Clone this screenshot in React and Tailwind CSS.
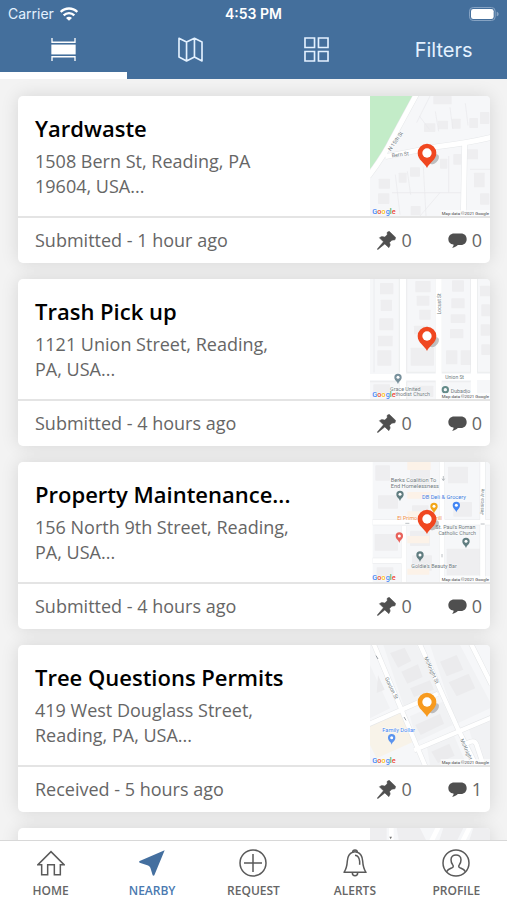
import React from "react";

const INK = "#4f4f4f";

function Wifi() {
  return (
    <svg viewBox="0 0 54 42" className="h-[14px] w-[18px]" fill="none" stroke="#fff" strokeWidth="7" aria-hidden="true">
      <path d="M2 15C16 1 38 1 52 15" />
      <path d="M11 25C20 16 34 16 43 25" />
      <path d="M27 41l-9-8c5-5 13-5 18 0z" fill="#fff" stroke="none" />
    </svg>
  );
}

function Battery() {
  return (
    <svg viewBox="0 0 90 42" className="h-[14px] w-[30px]" aria-hidden="true">
      <rect x="1.5" y="1.5" width="77" height="39" rx="11" fill="none" stroke="#86a3c3" strokeWidth="3" />
      <rect x="6" y="6" width="68" height="30" rx="7" fill="#fff" />
      <path d="M83 14c8 2 8 12 0 14z" fill="#86a3c3" />
    </svg>
  );
}

function ListIcon() {
  return (
    <svg viewBox="0 0 76 70" className="h-[23px] w-[25px]" fill="none" stroke="#fff" strokeWidth="4" aria-hidden="true">
      <path d="M3 0v13h70V0M3 70V57h70v13" />
      <rect x="1" y="20" width="74" height="30" fill="#fff" stroke="none" />
    </svg>
  );
}

function MapIcon() {
  return (
    <svg viewBox="0 0 76 74" className="h-[25px] w-[25px]" fill="none" stroke="#e3f1ff" strokeWidth="5" strokeLinejoin="round" aria-hidden="true">
      <path d="M3 3l23 11L50 3l23 11v58L50 60 26 72 3 60zM26 14v58M50 3v57" />
    </svg>
  );
}

function GridIcon() {
  return (
    <svg viewBox="0 0 76 76" className="h-[25px] w-[25px]" fill="none" stroke="#e3f1ff" strokeWidth="5" aria-hidden="true">
      <path d="M3 3h29v29H3zM44 3h29v29H44zM3 44h29v29H3zM44 44h29v29H44z" />
    </svg>
  );
}

function TackIcon() {
  return (
    <svg viewBox="0 0 56 56" className="h-[19px] w-[19px]" fill={INK} stroke={INK} strokeWidth="1.5" strokeLinejoin="round" aria-hidden="true">
      <path d="M36 1L55 19l-2 7-9 1-7 7 2 7-4 8-12-11L2 55l-1-2 18-21L7 20l7-4 9 2 7-7V4z" />
    </svg>
  );
}

function CommentIcon() {
  return (
    <svg viewBox="0 0 56 44" className="h-[15px] w-[19px]" fill={INK} aria-hidden="true">
      <path d="M18 1h20c11 0 17 7 17 17s-7 17-17 17h-9c-4 5-10 7-17 8 4-3 5-6 4-9C6 32 1 27 1 18 1 8 8 1 18 1z" />
    </svg>
  );
}

function HomeIcon() {
  return (
    <svg viewBox="0 0 84 76" className="h-[26px] w-[28px]" fill="none" stroke="#5a5a5a" strokeWidth="4.5" strokeLinejoin="miter" aria-hidden="true">
      <path d="M3 43h11v30h18V43h20v30h18V43h11L42 4z" />
    </svg>
  );
}

function NearbyIcon() {
  return (
    <svg viewBox="0 0 78 78" className="h-[26px] w-[26px]" fill="#446f9f" aria-hidden="true">
      <path d="M77 1L46 76c-1 2-4 2-5 0l-6-20c-1-5-5-8-10-10L2 38c-2-1-2-4 0-5z" />
    </svg>
  );
}

function RequestIcon() {
  return (
    <svg viewBox="0 0 84 84" className="h-[28px] w-[28px]" fill="none" stroke="#5a5a5a" strokeWidth="4.5" aria-hidden="true">
      <circle cx="42" cy="42" r="39" />
      <path d="M42 15v54M15 42h54" />
    </svg>
  );
}

function BellIcon() {
  return (
    <svg viewBox="0 0 72 84" className="h-[28px] w-[24px]" fill="none" stroke="#5a5a5a" strokeWidth="4.5" strokeLinejoin="round" aria-hidden="true">
      <path d="M29 10c0-9 14-9 14 0 12 4 15 13 16 26 1 16 3 24 10 34H3c7-10 9-18 10-34 1-13 4-22 16-26z" />
      <path d="M29 10c4-2 10-2 14 0M28 71c0 12 16 12 16 0M36 19c9 1 13 7 14 18v10" />
    </svg>
  );
}

function ProfileIcon() {
  return (
    <svg viewBox="0 0 84 84" className="h-[28px] w-[28px]" fill="none" stroke="#5a5a5a" strokeWidth="4.5" aria-hidden="true">
      <circle cx="42" cy="42" r="39" />
      <path d="M14 68c3-7 10-9 17-12 4-2 3-7 1-9-4-5-5-10-5-15 0-19 30-19 30 0 0 5-1 10-5 15-2 2-3 7 1 9 7 3 14 5 17 12" />
    </svg>
  );
}

// Small place marker used inside the map thumbnails; (x, y) is the head's centre.
function Poi({ x, y, fill }) {
  return (
    <g transform={`translate(${x} ${y})`}>
      <path d="M0 20C-2 11-11 9-11-1a11 11 0 0 1 22 0C11 9 2 11 0 20z" fill={fill} />
      <circle r="4.5" cy="-1" fill="#fff" />
    </g>
  );
}

function Label({ x, y, fill = "#6f7a80", size = 17, rotate = 0, anchor = "start", children }) {
  return (
    <text
      transform={`translate(${x} ${y}) rotate(${rotate})`}
      fill={fill}
      fontSize={size}
      textAnchor={anchor}
      stroke="#fff"
      strokeWidth="3"
      paintOrder="stroke"
      strokeOpacity=".7"
    >
      {children}
    </text>
  );
}

function Houses({ list }) {
  return list.map(([x, y, w, h], i) => <rect key={i} x={x} y={y} width={w} height={h} rx="2" fill="#eeeef0" />);
}

function YardMap() {
  return (
    <g>
      <path d="M0 0h136L46 165 0 220z" fill="#c3ecc8" />
      <Houses
        list={[
          [190, 0, 55, 25], [162, 82, 34, 26], [204, 74, 30, 26], [246, 68, 26, 30], [298, 66, 26, 30], [330, 48, 28, 36],
          [26, 248, 34, 30], [86, 230, 24, 30], [120, 214, 30, 28], [210, 188, 22, 30], [250, 174, 24, 32], [290, 160, 34, 30],
          [24, 292, 34, 32], [312, 230, 32, 44], [330, 292, 28, 34], [122, 330, 30, 28],
        ]}
      />
      <path d="M180 0l-40 80M148 60l30 40M196 46l10 60M240 34l8 64M286 22l8 66M66 290h210M76 236l14 120M112 226l10 70M160 212l8 148M236 180v110M210 290l-60 70M300 220h60" stroke="#e8e9eb" strokeWidth="2" fill="none" />
      <path d="M142-10L66 130Q44 176-4 240M46 182L200 152Q290 142 364 124M284 142L280 362" stroke="#e6e8ea" strokeWidth="18" fill="none" />
      <path d="M142-10L66 130Q44 176-4 240M46 182L200 152Q290 142 364 124M284 142L280 362" stroke="#fff" strokeWidth="15" fill="none" />
      <Label x={62} y={166} rotate={-55} size={16}>N 15th St</Label>
      <Label x={66} y={184} rotate={-7} size={16}>Bern St</Label>
    </g>
  );
}

function TrashMap() {
  return (
    <g>
      <Houses
        list={[
          [30, 12, 40, 34], [32, 62, 34, 34], [28, 118, 42, 36], [24, 170, 44, 32], [22, 214, 42, 46],
          [136, 6, 46, 34], [140, 50, 38, 30], [148, 92, 34, 30], [132, 140, 42, 26], [122, 206, 70, 54],
          [246, 4, 36, 34], [244, 58, 40, 30], [242, 106, 44, 26], [240, 150, 40, 28], [228, 214, 34, 42], [272, 214, 34, 44],
          [330, 20, 30, 32], [334, 76, 26, 36], [332, 136, 28, 34], [334, 196, 26, 32], [10, 316, 50, 36], [130, 320, 60, 34],
        ]}
      />
      <path d="M12 0v280M88 0v280M110 0v280h88V0M214 0v280h88V0M322 0v280h40M0 308h90v52M110 360v-52h88v52M214 360v-52h88" stroke="#e6e8ea" strokeWidth="2" fill="none" />
      <path d="M-4 294h370M99-4v368M206-4v368M312-4v368" stroke="#fff" strokeWidth="18" fill="none" />
      <Label x={213} y={106} rotate={-90} size={15}>Locust St</Label>
      <Label x={226} y={299} size={15}>Union St</Label>
      <Poi x={84} y={296} fill="#78909c" />
      <Label x={106} y={335} anchor="middle" size={16}>Grace United</Label>
      <Label x={76} y={351} size={16}>thodist Church</Label>
      <circle cx="226" cy="332" r="8" fill="none" stroke="#648b89" strokeWidth="6" />
      <Label x={242} y={341} size={16}>Dubadjo</Label>
    </g>
  );
}

function PropertyMap() {
  return (
    <g>
      <rect x="0" y="0" width="8" height="360" fill="#fff" />
      <Houses
        list={[
          [16, 10, 44, 46], [24, 100, 60, 40], [120, 8, 60, 60], [126, 130, 50, 30], [234, 14, 60, 50], [250, 120, 56, 44],
          [14, 216, 70, 50], [120, 206, 60, 46], [126, 280, 60, 46], [230, 260, 110, 80], [20, 316, 50, 30],
        ]}
      />
      <path d="M112 0h70v24h-70zM112 90h70v20h-70zM112 148h50v22h-50zM112 222h66v22h-66zM112 320h66v18h-66z" fill="#fcf2e8" />
      <path d="M8 181h356M216-4v368M102 192v172M8 296h92M338-4v368" stroke="#e6e8ea" strokeWidth="18" fill="none" />
      <path d="M8 181h356M216-4v368M102 192v172M8 296h92M338-4v368" stroke="#fff" strokeWidth="15" fill="none" />
      <path d="M220 42v12M216 50l4 6 4-6M106 184h12M216 276v10M332 186h12" stroke="#9aa0a6" strokeWidth="2" fill="none" />
      <Label x={62} y={61} size={17}>Berks Coalition To</Label>
      <Label x={62} y={79} size={17}>End Homelessness</Label>
      <Poi x={90} y={98} fill="#607d80" />
      <Label x={156} y={112} size={17} fill="#3f7de0">DB Deli &amp; Grocery</Label>
      <Poi x={192} y={134} fill="#f2a516" />
      <Poi x={259} y={131} fill="#4285f4" />
      <Label x={82} y={173} size={16} fill="#f08a45">El Primo Bar &amp; Grill</Label>
      <Poi x={88} y={223} fill="#e8615a" />
      <Label x={316} y={202} size={16} anchor="end">St. Paul&apos;s Roman</Label>
      <Label x={318} y={220} size={16} anchor="end">Catholic Church</Label>
      <Poi x={288} y={239} fill="#607d80" />
      <Poi x={150} y={280} fill="#607d80" />
      <Label x={124} y={318} size={16}>Goldie&apos;s Beauty Bar</Label>
      <Label x={340} y={160} rotate={-88} size={15}>Jessica Ave</Label>
    </g>
  );
}

function TreeMap() {
  return (
    <g>
      <path d="M0 60L60 190 0 220zM40 0h100l70 140-108 46zM180 0h90l90 170v20l-100 46zM120 214l98-44 30 70-108 50zM170 300l80-34 40 94H180zM296 250l64-26v136h-30z" fill="#f1f2f4" />
      <path d="M24 90l20 44-24 10zM60 24l44-16 20 40-40 20zM94 80l50-22 14 38-46 20zM120 130l60-24 12 28-60 22zM210 50l50-20 20 44-50 20zM236 112l60-26 20 44-56 24zM136 240l74-34 12 30-70 34zM184 320l54-24 16 36-50 22z" fill="#ebebed" />
      <path d="M0 240l90-40 40 90-110 50-20-40z" fill="#f8f3e9" />
      <path d="M10-6L166 364M148-6L262 248 320 364M-4 238L204 146M132 316L364 218M302-6l62 124M284 300q30-22 36 0l20 60" stroke="#e4e6e8" strokeWidth="16" fill="none" />
      <path d="M10-6L166 364M148-6L262 248 320 364M-4 238L204 146M132 316L364 218M302-6l62 124M284 300q30-22 36 0l20 60" stroke="#fff" strokeWidth="13" fill="none" />
      <Label x={44} y={100} rotate={64} size={16}>Gordon St</Label>
      <Label x={162} y={38} rotate={66} size={16}>McKnight St</Label>
      <Label x={270} y={284} rotate={66} size={16}>McKnight</Label>
      <path d="M18 32l6 10M102 216l6 10" stroke="#9aa0a6" strokeWidth="3" />
      <Label x={37} y={260} size={17} fill="#4285f4">Family Dollar</Label>
      <Poi x={65} y={279} fill="#5b94ee" />
    </g>
  );
}

function NextMap() {
  return (
    <g>
      <path d="M0 0h50v40H0zM80 0h70l30 60H90zM220 0h60l-30 60h-50zM310 0h50v60h-70z" fill="#eeeef0" />
      <path d="M64-4v80M206-4l-40 80M300-4l-40 80" stroke="#fff" strokeWidth="14" />
      <path d="M58 26l4 8 4-8z" fill="#777" />
    </g>
  );
}

function MapThumb({ children, pin }) {
  return (
    <svg
      viewBox="0 0 360 360"
      className="size-[120px] shrink-0 rounded-tr-[4px] font-['Roboto','Liberation_Sans',sans-serif]"
      role="img"
      aria-label="Map of the request location"
    >
      <rect width="360" height="360" fill="#f6f7f9" />
      {children}
      {pin && (
        <g>
          <text x="7" y="353" fontSize="22" fontWeight="500" stroke="#fff" strokeWidth="2" paintOrder="stroke">
            <tspan fill="#4285f4">G</tspan>
            <tspan fill="#ea4335">o</tspan>
            <tspan fill="#fbbc05">o</tspan>
            <tspan fill="#4285f4">g</tspan>
            <tspan fill="#34a853">l</tspan>
            <tspan fill="#ea4335">e</tspan>
          </text>
          <rect x="212" y="342" width="148" height="18" fill="#fff" opacity=".6" />
          <text x="357" y="356" fontSize="13" textAnchor="end" fill="#444">Map data ©2021 Google</text>
          <ellipse cx="192" cy="190" rx="18" ry="11" transform="rotate(-45 192 190)" fill="#555" opacity=".35" />
          <path d="M171 216C164 200 143 192 143 171a28 28 0 0 1 56 0C199 192 178 200 171 216z" fill={pin} />
          <circle cx="171" cy="171" r="14" fill="#fff" />
        </g>
      )}
    </svg>
  );
}

const requests = [
  { title: "Yardwaste", address: "1508 Bern St, Reading, PA 19604, USA...", status: "Submitted - 1 hour ago", pins: 0, comments: 0, pin: "#f04720", Map: YardMap },
  { title: "Trash Pick up", address: "1121 Union Street, Reading, PA, USA...", status: "Submitted - 4 hours ago", pins: 0, comments: 0, pin: "#f04720", Map: TrashMap },
  { title: "Property Maintenance...", address: "156 North 9th Street, Reading, PA, USA...", status: "Submitted - 4 hours ago", pins: 0, comments: 0, pin: "#f04720", Map: PropertyMap },
  { title: "Tree Questions Permits", address: "419 West Douglass Street, Reading, PA, USA...", status: "Received - 5 hours ago", pins: 0, comments: 1, pin: "#f79a1e", Map: TreeMap },
];

function RequestCard({ title, address, status, pins, comments, pin, Map }) {
  return (
    <article className="shrink-0 rounded-[5px] bg-white shadow-[0_0_18px_rgba(0,0,0,0.12)]">
      <div className="flex h-[120px] justify-between">
        <div className="pt-[17px] pl-[17px]">
          <h2 className="text-[22px] leading-[30px] font-semibold text-black">{title}</h2>
          <p className="mt-[6px] max-w-[262px] text-[18px] leading-[25px] text-[#666]">{address}</p>
        </div>
        <MapThumb pin={pin}>
          <Map />
        </MapThumb>
      </div>
      <div className="flex h-[47px] items-center border-t-2 border-[#e4e4e4] pr-2 pl-[17px] text-[18px] text-[#666]">
        <span className="flex-1">{status}</span>
        <span className="flex items-center gap-[5px]">
          <TackIcon />
          {pins}
        </span>
        <span className="ml-[36px] flex items-center gap-[5px]">
          <CommentIcon />
          {comments}
        </span>
      </div>
    </article>
  );
}

const viewTabs = [
  { name: "List", Icon: ListIcon, active: true },
  { name: "Map", Icon: MapIcon },
  { name: "Grid", Icon: GridIcon },
];

const navItems = [
  { name: "HOME", Icon: HomeIcon },
  { name: "NEARBY", Icon: NearbyIcon, active: true },
  { name: "REQUEST", Icon: RequestIcon },
  { name: "ALERTS", Icon: BellIcon },
  { name: "PROFILE", Icon: ProfileIcon },
];

export default function App() {
  return (
    <div className="flex h-screen flex-col overflow-hidden bg-[#f3f3f3] font-['Open_Sans','Noto_Sans',sans-serif]">
      <header className="shrink-0 bg-[#446f9c] font-['Inter','Liberation_Sans',sans-serif] text-white">
        <div className="grid h-[27px] grid-cols-3 items-center px-2 text-[14px]">
          <span className="flex items-center gap-[6px] text-[#e3f1ff]">
            Carrier <Wifi />
          </span>
          <span className="text-center font-semibold">4:53 PM</span>
          <span className="flex justify-end">
            <Battery />
          </span>
        </div>
        <div className="grid h-[52px] grid-cols-4">
          {viewTabs.map(({ name, Icon, active }) => (
            <button
              key={name}
              aria-label={name}
              className={`flex items-center justify-center border-b-[7px] ${active ? "border-white" : "border-transparent"}`}
            >
              <Icon />
            </button>
          ))}
          <button className="border-b-[7px] border-transparent text-[20px] text-[#e3f1ff]">Filters</button>
        </div>
      </header>

      <main className="flex min-h-0 flex-1 flex-col gap-4 overflow-hidden pt-[17px] pr-[17px] pl-[18px]">
        {requests.map((r) => (
          <RequestCard key={r.title} {...r} />
        ))}
        <article className="flex shrink-0 justify-end rounded-[5px] bg-white shadow-[0_0_18px_rgba(0,0,0,0.12)]">
          <MapThumb>
            <NextMap />
          </MapThumb>
        </article>
      </main>

      <nav className="grid h-[60px] shrink-0 grid-cols-5 border-t border-[#d8d8d8] bg-white">
        {navItems.map(({ name, Icon, active }) => (
          <a
            key={name}
            href="#"
            className={`flex flex-col items-center text-[12px] leading-[16px] font-semibold ${active ? "text-[#4a79b0]" : "text-[#666]"}`}
          >
            <span className="mt-2 mb-[6px] flex h-[28px] items-center">
              <Icon />
            </span>
            {name}
          </a>
        ))}
      </nav>
    </div>
  );
}
